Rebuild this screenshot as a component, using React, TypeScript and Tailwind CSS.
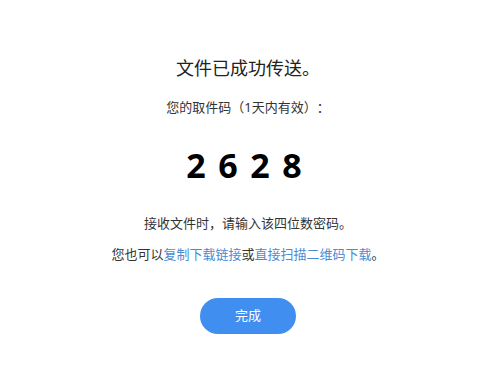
export default function App() {
  return (
    <div className="w-[496px] h-[383px] bg-white flex flex-col items-center pt-[56px] text-[#333] font-['Noto_Sans','Noto_Sans_CJK_SC',sans-serif] [text-spacing-trim:space-all]">
      <h1 className="text-[18px] leading-[24px] font-normal text-[#222]">文件已成功传送。</h1>
      <p className="mt-[17px] text-[13px] leading-[20px]">您的取件码（1天内有效）：</p>
      <div className="mt-[28px] h-[40px] text-[34px] leading-[40px] font-bold text-black tracking-[12.5px] pl-[4.5px] font-['Open_Sans',sans-serif]">
        2628
      </div>
      <p className="mt-[28px] text-[13px] leading-[20px]">接收文件时，请输入该四位数密码。</p>
      <p className="mt-[11px] text-[13px] leading-[20px]">
        您也可以<a className="text-[#4a8ad4] cursor-pointer">复制下载链接</a>或<a className="text-[#4a8ad4] cursor-pointer">直接扫描二维码下载</a>。
      </p>
      <button className="mt-[34px] w-[96px] h-[36px] rounded-full bg-[#3f8ef0] text-white text-[13px]">
        完成
      </button>
    </div>
  );
}
